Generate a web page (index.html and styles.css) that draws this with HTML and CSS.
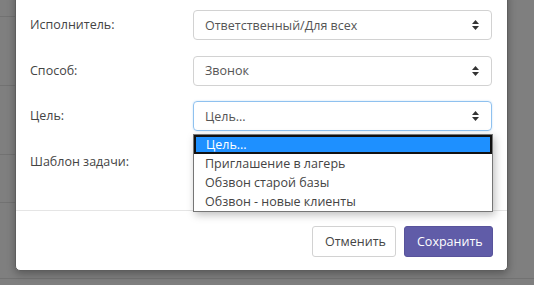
FILE: index.html
```html
<!DOCTYPE html>
<html lang="ru">
<head>
    <meta charset="UTF-8">
    <meta name="viewport" content="width=device-width, initial-scale=1.0">
    <title>Задача</title>
    <link rel="stylesheet" href="styles.css">
</head>
<body>
    <div class="backdrop">
        <div class="side">
            <div class="side__row r1"></div>
            <div class="side__row r2"></div>
            <div class="side__row r3"></div>
            <div class="side__row r4"></div>
        </div>
        <div class="bottom__row r5"></div>
        <div class="bottom__row r6"></div>
    </div>

    <div class="modal">
        <form class="modal__body">
            <div class="form__row">
                <label>Исполнитель:</label>
                <div class="select">
                    <span>Ответственный/Для всех</span>
                    <svg class="caret" width="7" height="10" viewBox="0 0 7 10"><path d="M3.5 0L7 4H0z M3.5 10L7 6H0z" fill="#333"/></svg>
                </div>
            </div>
            <div class="form__row">
                <label>Способ:</label>
                <div class="select">
                    <span>Звонок</span>
                    <svg class="caret" width="7" height="10" viewBox="0 0 7 10"><path d="M3.5 0L7 4H0z M3.5 10L7 6H0z" fill="#333"/></svg>
                </div>
            </div>
            <div class="form__row">
                <label>Цель:</label>
                <div class="select select--focus">
                    <span>Цель...</span>
                    <svg class="caret" width="7" height="10" viewBox="0 0 7 10"><path d="M3.5 0L7 4H0z M3.5 10L7 6H0z" fill="#333"/></svg>
                </div>
            </div>
            <div class="form__row">
                <label>Шаблон задачи:</label>
                <div class="select"><span></span></div>
            </div>
        </form>
        <div class="modal__footer">
            <button type="button" class="btn btn--default">Отменить</button>
            <button type="button" class="btn btn--purple">Сохранить</button>
        </div>

        <ul class="dropdown">
            <li class="dropdown__item dropdown__item--active">Цель...</li>
            <li class="dropdown__item">Приглашение в лагерь</li>
            <li class="dropdown__item">Обзвон старой базы</li>
            <li class="dropdown__item">Обзвон - новые клиенты</li>
        </ul>
    </div>
</body>
</html>
```

FILE: styles.css
```css
* {
    box-sizing: border-box;
    margin: 0px;
    padding: 0px;
}
body {
    background-color: #7f7f7f;
    font-family: "Open Sans", "Noto Sans", sans-serif;
    font-size: 12.5px;
    color: #444;
    width: 534px;
    height: 285px;
    overflow: hidden;
    position: relative;
}
.backdrop {
    height: 285px;
}
.side {
    width: 15px;
    height: 263px;
}
.side__row {
    border-bottom: 1px solid #727272;
}
.r1 { height: 17px; }
.r2 { height: 69px; }
.r3 { height: 69px; }
.r4 { height: 48px; }
.bottom__row {
    border-bottom: 1px solid #727272;
    height: 16px;
}
.modal {
    position: absolute;
    left: 15px;
    top: -11px;
    width: 493px;
    background-color: #fff;
    border: 1px solid #5e5e5e;
    border-radius: 5px;
    box-shadow: 0 3px 9px rgba(0, 0, 0, 0.3);
}
.modal__body {
    padding: 20px 15px 33px 14px;
}
.form__row {
    display: grid;
    grid-template-columns: 163px 299px;
    align-items: center;
    margin-bottom: 15.5px;
}
.form__row:last-child {
    margin-bottom: 0px;
}
.form__row label {
    line-height: 30px;
}
.select {
    height: 30px;
    border: 1px solid #d2d2d2;
    border-radius: 4px;
    display: flex;
    align-items: center;
    justify-content: space-between;
    padding: 0px 12px 0px 11px;
    color: #555;
}
.select--focus {
    border-color: #8fc1ef;
    box-shadow: 0 0 2px rgba(102, 175, 233, 0.4);
}
.caret {
    display: block;
}
.modal__footer {
    border-top: 1px solid #e5e5e5;
    padding: 15px 14px 13px 15px;
    display: flex;
    justify-content: flex-end;
    gap: 8px;
}
.btn {
    height: 31px;
    padding: 0px 12px;
    border-radius: 3px;
    font-family: inherit;
    font-size: 12.5px;
    border: 1px solid transparent;
}
.btn--default {
    background-color: #fff;
    border-color: #d2d2d2;
    color: #444;
    width: 84px;
}
.btn--purple {
    background-color: #605ca8;
    border-color: #58539b;
    color: #fff;
    width: 89px;
}
.dropdown {
    position: absolute;
    left: 177px;
    top: 144px;
    width: 300px;
    list-style: none;
    background-color: #fff;
    border: 1px solid #767676;
    box-shadow: 2px 3px 8px rgba(0, 0, 0, 0.25);
}
.dropdown__item {
    height: 19px;
    line-height: 19px;
    padding-left: 11px;
    color: #444;
}
.dropdown__item--active {
    background-color: #1e90ff;
    color: #fff;
    border: 2px solid #111;
    line-height: 15px;
    padding-left: 10px;
}
```
